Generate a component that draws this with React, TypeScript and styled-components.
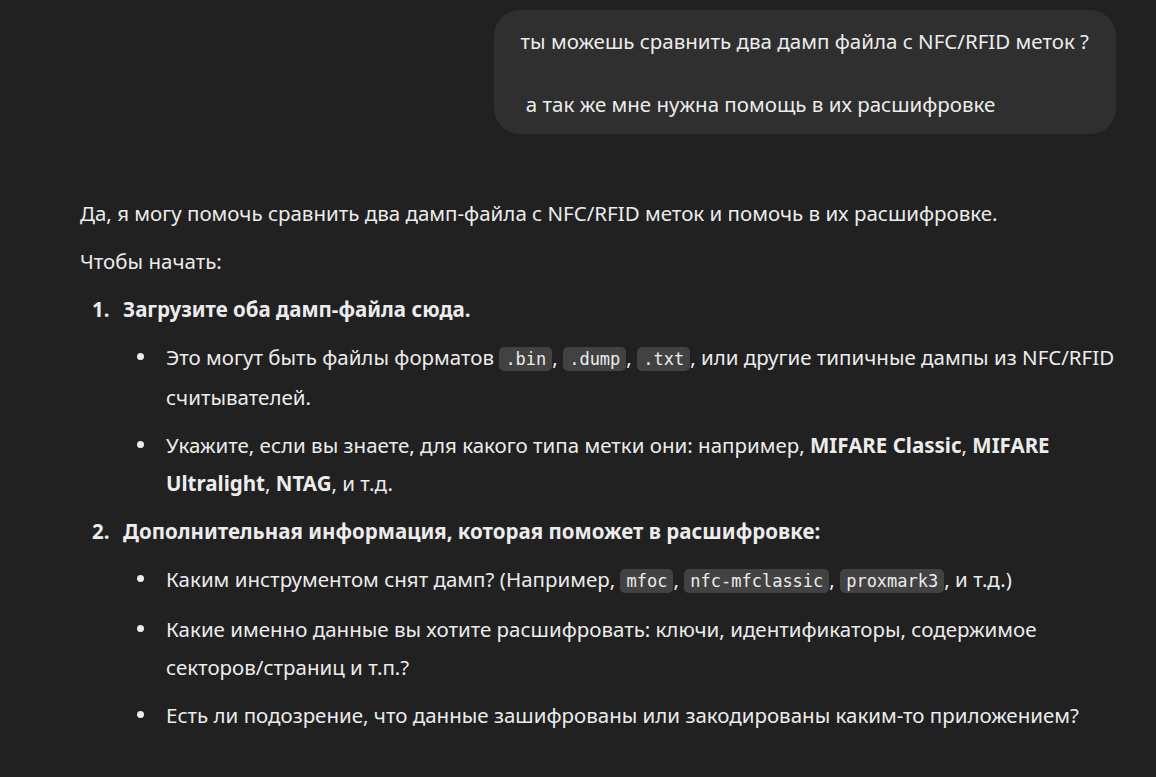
import React from "react";
import styled, { createGlobalStyle } from "styled-components";

const GlobalStyle = createGlobalStyle`
  html, body {
    margin: 0;
    padding: 0;
    background: #212121;
  }
  body {
    font-family: "Noto Sans", "Open Sans", sans-serif;
    color: #ececec;
    -webkit-font-smoothing: antialiased;
  }
`;

const Page = styled.div`
  display: flex;
  flex-direction: column;
  padding: 10px 0 40px 80px;
`;

const UserRow = styled.div`
  display: flex;
  justify-content: flex-end;
  padding-right: 40px;
`;

const Bubble = styled.div`
  background: #2f2f2f;
  border-radius: 26px;
  padding: 16px 27px 13px 27px;
  font-size: 20.5px;
  line-height: 31.5px;
  white-space: pre-wrap;
`;

const Answer = styled.div`
  display: flex;
  flex-direction: column;
  gap: 10px;
  margin-top: 60px;
  padding-right: 38px;
  font-size: 20.5px;
  line-height: 38px;
`;

const Para = styled.p`
  margin: 0;
`;

const OrderedItem = styled.div`
  display: flex;
  flex-direction: column;
  gap: 10px;
`;

const OrderedHead = styled.div`
  display: flex;
  font-weight: 700;
`;

const Num = styled.span`
  width: 31px;
  padding-left: 12px;
  flex-shrink: 0;
`;

const BulletRow = styled.div`
  display: flex;
  align-items: flex-start;
  padding-left: 57px;
`;

const Dot = styled.span`
  width: 7px;
  height: 7px;
  border-radius: 50%;
  background: #ececec;
  flex-shrink: 0;
  margin-top: 15px;
  margin-right: 22px;
`;

const BulletText = styled.div`
  flex: 1;
`;

const Code = styled.code`
  font-family: "DejaVu Sans Mono", "Liberation Mono", monospace;
  font-size: 17px;
  background: #424242;
  border-radius: 5px;
  padding: 2px 6px;
`;

const B = styled.strong`
  font-weight: 700;
`;

export default function App() {
  return (
    <>
      <GlobalStyle />
      <Page>
        <UserRow>
          <Bubble>{"ты можешь сравнить два дамп файла с NFC/RFID меток ?\n\n а так же мне нужна помощь в их расшифровке"}</Bubble>
        </UserRow>
        <Answer>
          <Para>Да, я могу помочь сравнить два дамп-файла с NFC/RFID меток и помочь в их расшифровке.</Para>
          <Para>Чтобы начать:</Para>
          <OrderedItem>
            <OrderedHead>
              <Num>1.</Num>
              <span>Загрузите оба дамп-файла сюда.</span>
            </OrderedHead>
            <BulletRow>
              <Dot />
              <BulletText>
                Это могут быть файлы форматов <Code>.bin</Code>, <Code>.dump</Code>, <Code>.txt</Code>, или другие типичные дампы из NFC/RFID считывателей.
              </BulletText>
            </BulletRow>
            <BulletRow>
              <Dot />
              <BulletText>
                Укажите, если вы знаете, для какого типа метки они: например, <B>MIFARE Classic</B>, <B>MIFARE Ultralight</B>, <B>NTAG</B>, и т.д.
              </BulletText>
            </BulletRow>
          </OrderedItem>
          <OrderedItem>
            <OrderedHead>
              <Num>2.</Num>
              <span>Дополнительная информация, которая поможет в расшифровке:</span>
            </OrderedHead>
            <BulletRow>
              <Dot />
              <BulletText>
                Каким инструментом снят дамп? (Например, <Code>mfoc</Code>, <Code>nfc-mfclassic</Code>, <Code>proxmark3</Code>, и т.д.)
              </BulletText>
            </BulletRow>
            <BulletRow>
              <Dot />
              <BulletText>
                Какие именно данные вы хотите расшифровать: ключи, идентификаторы, содержимое секторов/страниц и т.п.?
              </BulletText>
            </BulletRow>
            <BulletRow>
              <Dot />
              <BulletText>
                Есть ли подозрение, что данные зашифрованы или закодированы каким-то приложением?
              </BulletText>
            </BulletRow>
          </OrderedItem>
        </Answer>
      </Page>
    </>
  );
}
